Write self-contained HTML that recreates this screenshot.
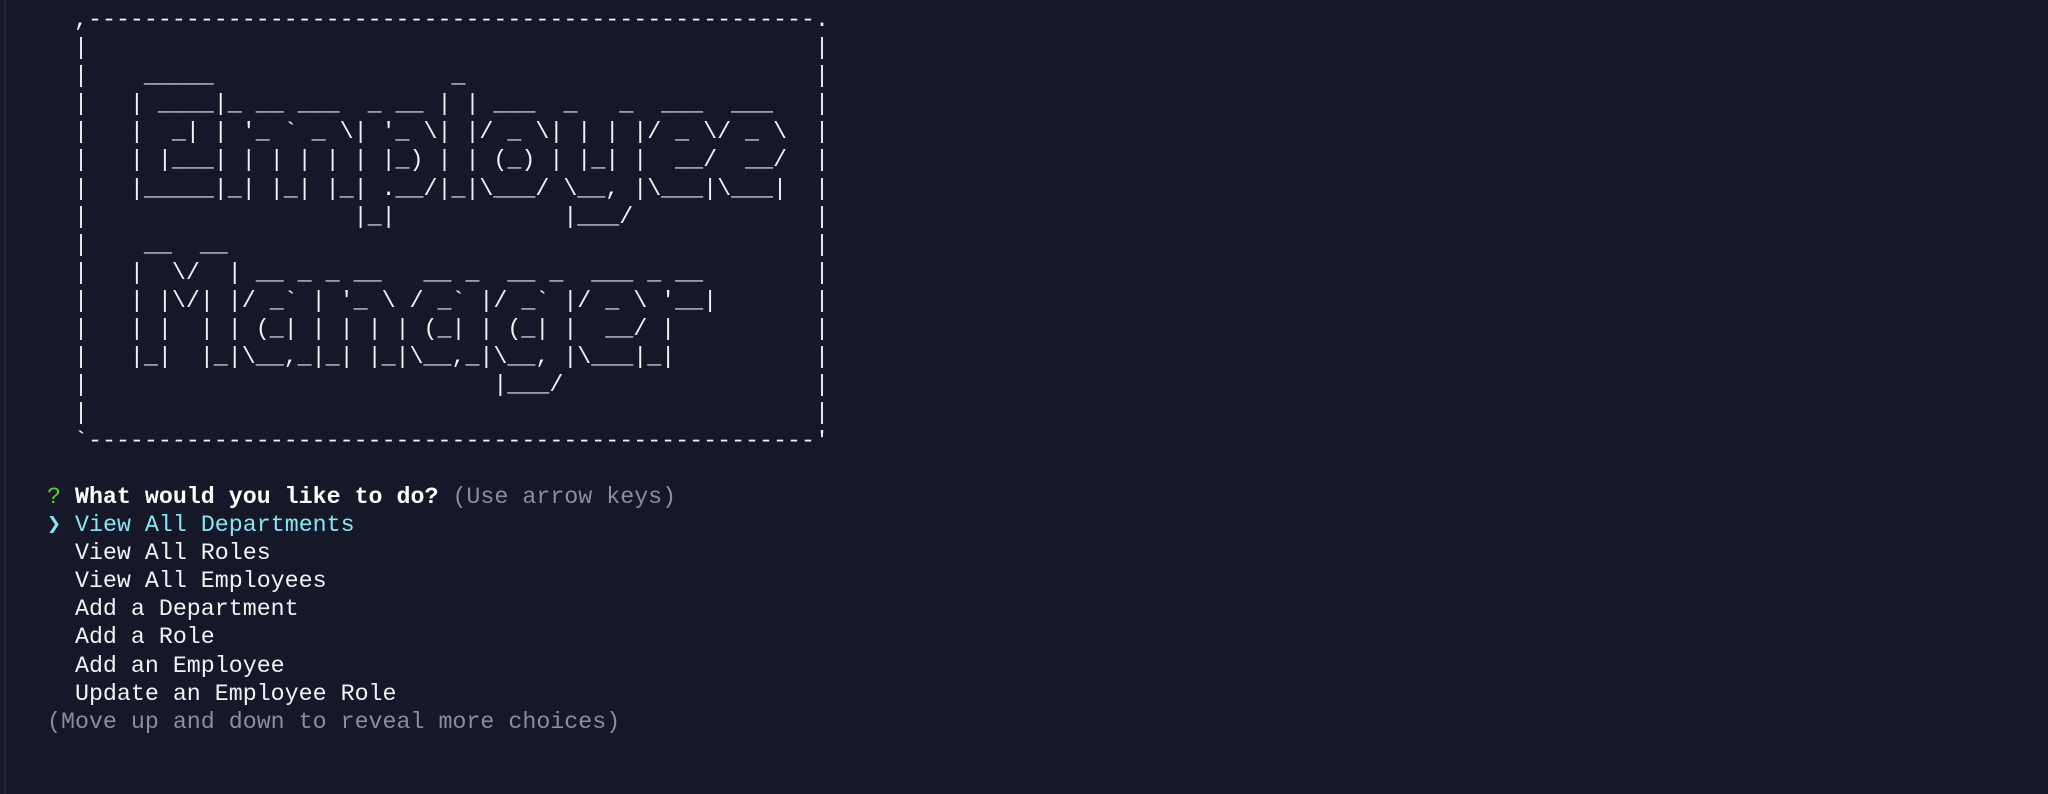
<!DOCTYPE html>
<html><head><meta charset="utf-8"><style>
html,body{margin:0;padding:0;background:#161729;width:2048px;height:794px;overflow:hidden}
.edge{position:absolute;left:4px;top:0;width:2px;height:794px;background:#23253a}
pre{position:absolute;margin:0;font-family:"Liberation Mono","DejaVu Sans Mono",monospace;font-size:23.3px;line-height:28.1px;color:#f2f2f2;white-space:pre}
#box{left:74px;top:6px}
#menu{left:47px;top:483px}
b{font-weight:bold;color:#fff}
.g{color:#5fcf2a}.c{color:#86e6f2}.m{color:#8b8c9c}
</style></head><body>
<div class="edge"></div>
<pre id="box">,----------------------------------------------------.
|                                                    |
|    _____                 _                         |
|   | ____|_ __ ___  _ __ | | ___  _   _  ___  ___   |
|   |  _| | '_ ` _ \| '_ \| |/ _ \| | | |/ _ \/ _ \  |
|   | |___| | | | | | |_) | | (_) | |_| |  __/  __/  |
|   |_____|_| |_| |_| .__/|_|\___/ \__, |\___|\___|  |
|                   |_|            |___/             |
|    __  __                                          |
|   |  \/  | __ _ _ __   __ _  __ _  ___ _ __        |
|   | |\/| |/ _` | '_ \ / _` |/ _` |/ _ \ '__|       |
|   | |  | | (_| | | | | (_| | (_| |  __/ |          |
|   |_|  |_|\__,_|_| |_|\__,_|\__, |\___|_|          |
|                             |___/                  |
|                                                    |
`----------------------------------------------------'</pre>
<pre id="menu"><span class="g">?</span> <b>What would you like to do?</b> <span class="m">(Use arrow keys)</span>
<span class="c">❯ View All Departments</span>
  View All Roles
  View All Employees
  Add a Department
  Add a Role
  Add an Employee
  Update an Employee Role
<span class="m">(Move up and down to reveal more choices)</span></pre>
</body></html>
